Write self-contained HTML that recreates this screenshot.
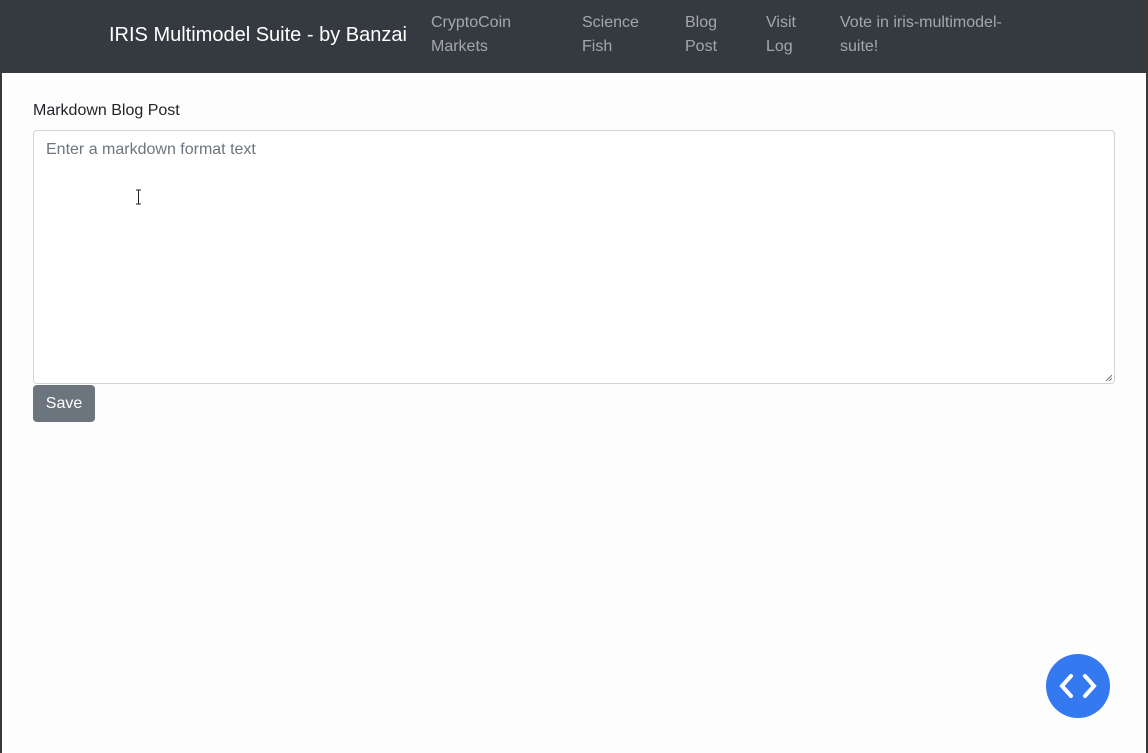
<!DOCTYPE html>
<html><head><meta charset="utf-8"><style>
html,body{margin:0;padding:0;width:1148px;height:753px;overflow:hidden;background:#3a3a3a;font-family:"Liberation Sans",sans-serif}
.page{position:absolute;left:2px;top:0;width:1144px;height:753px;background:#fefdfd}
.nav{position:absolute;left:0;top:0;width:1144px;height:73px;background:#343a40}
.brand{position:absolute;left:107px;top:24px;color:#fff;font-size:20px}
.link{position:absolute;top:11px;color:rgba(255,255,255,.55);font-size:16px;line-height:24px}
label{position:absolute;left:31px;top:102px;font-size:16px;color:#212529}
.ta{position:absolute;left:31px;top:130px;width:1080px;height:252px;border:1px solid #ced4da;border-radius:4px;background:#fff}
.ph{position:absolute;left:12px;top:10px;color:#6c757d;font-size:16px}
.btn{position:absolute;left:31px;top:385px;width:62px;height:37px;background:#6c757d;border-radius:4px;color:#fff;font-size:16px;line-height:37px;text-align:center}
.fab{position:absolute;left:1044px;top:654px;width:64px;height:64px;border-radius:50%;background:#3479f0}
</style></head><body>
<div class="page">
<div class="nav">
<div class="brand">IRIS Multimodel Suite - by Banzai</div>
<div class="link" style="left:429px">CryptoCoin<br>Markets</div>
<div class="link" style="left:580px">Science<br>Fish</div>
<div class="link" style="left:683px">Blog<br>Post</div>
<div class="link" style="left:764px">Visit<br>Log</div>
<div class="link" style="left:838px">Vote in iris-multimodel-<br>suite!</div>
</div>
<label>Markdown Blog Post</label>
<div class="ta"><div class="ph">Enter a markdown format text</div>
<svg style="position:absolute;right:1px;bottom:1px" width="8" height="8"><path d="M1 7L7 1M4 7L7 4" stroke="#777" stroke-width="1"/></svg></div>
<svg style="position:absolute;left:133px;top:189px" width="7" height="16"><path d="M1 1h5M3.5 1v14M1 15h5" stroke="#222" stroke-width="1" fill="none"/></svg>
<div class="btn">Save</div>
<div class="fab"><svg width="64" height="64"><path d="M25 22L16 32L25 42M39 22L48 32L39 42" stroke="#fff" stroke-width="4" fill="none" stroke-linecap="round"/></svg></div>
</div>
</body></html>
